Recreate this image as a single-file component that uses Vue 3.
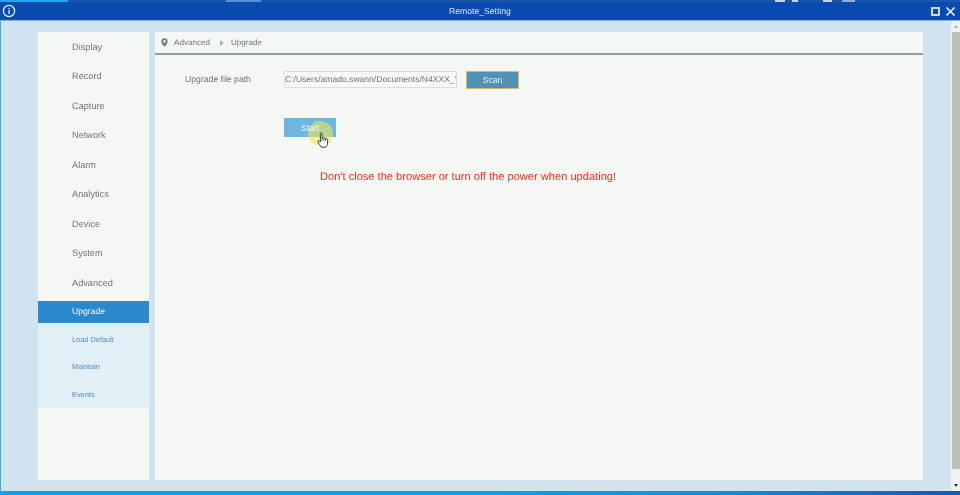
<template>
  <div class="window">
    <div class="topstrip">
      <span class="ts a"></span><span class="ts c"></span><span class="ts e"></span><span class="ts f"></span><span class="ts g"></span><span class="ts h"></span>
    </div>
    <header class="titlebar">
      <svg class="info" width="14" height="14" viewBox="0 0 14 14">
        <circle cx="7" cy="7" r="5.6" fill="none" stroke="#e8f0fa" stroke-width="1.3" />
        <rect x="6.4" y="6" width="1.3" height="4" fill="#e8f0fa" />
        <rect x="6.4" y="3.8" width="1.3" height="1.3" fill="#e8f0fa" />
      </svg>
      <span class="title">Remote_Setting</span>
      <div class="winbtns">
        <svg width="9" height="9" viewBox="0 0 9 9"><rect x="1" y="1" width="7" height="7" fill="none" stroke="#eef3fb" stroke-width="1.7" /></svg>
        <svg width="11" height="11" viewBox="0 0 11 11"><path d="M1.5 1.5 L9.5 9.5 M9.5 1.5 L1.5 9.5" stroke="#eef3fb" stroke-width="1.7" fill="none" /></svg>
      </div>
    </header>
    <div class="body">
      <div class="content">
        <nav class="sidebar">
          <a v-for="item in items" :key="item" class="nav">{{ item }}</a>
          <a class="nav active">Upgrade</a>
          <div class="subgroup">
            <a v-for="s in subs" :key="s" class="sub">{{ s }}</a>
          </div>
        </nav>
        <main class="panel">
          <div class="crumbs">
            <svg class="pin" width="7" height="9" viewBox="0 0 7 9">
              <path d="M3.5 0.2 A3.2 3.2 0 0 1 6.7 3.4 C6.7 5.3 4.6 7.4 3.5 8.8 C2.4 7.4 0.3 5.3 0.3 3.4 A3.2 3.2 0 0 1 3.5 0.2 Z" fill="#6f8080" />
              <circle cx="3.5" cy="3.3" r="1.2" fill="#f5f7f5" />
            </svg>
            <span class="crumb">Advanced</span>
            <span class="arrow"></span>
            <span class="crumb">Upgrade</span>
          </div>
          <div class="form">
            <div class="row">
              <label class="label">Upgrade file path</label>
              <div class="path">C:/Users/amado.swann/Documents/N4XXX_Y</div>
              <button class="scan">Scan</button>
            </div>
            <div class="startwrap">
              <span class="halo"></span>
              <button class="start">Start</button>
              <svg class="hand" width="12" height="16" viewBox="0 0 12 16">
                <path d="M3.4 1.6 C3.4 0.4 5 0.4 5 1.6 V6.2 C5.6 5.7 6.4 5.8 6.8 6.3 C7.4 5.9 8.2 6.1 8.5 6.7 C9.2 6.4 10.6 6.7 10.6 8 V11 C10.6 13 9.6 14.2 9 15.2 H4.4 C3.4 13.6 1.6 11.6 0.9 10 C0.5 9 1.6 8.2 2.4 9 L3.4 10 Z" fill="#fff" stroke="#2b2b2b" stroke-width="0.9" stroke-linejoin="round" />
                <path d="M5 6.2 V9 M6.8 6.3 V9 M8.5 6.7 V9" stroke="#2b2b2b" stroke-width="0.7" fill="none" />
              </svg>
            </div>
            <p class="warn">Don't close the browser or turn off the power when updating!</p>
          </div>
        </main>
      </div>
      <div class="scrollbar">
        <span class="up"></span>
        <span class="thumb"></span>
        <span class="down"></span>
      </div>
    </div>
    <div class="bottom"></div>
  </div>
</template>

<script setup>
const items = ['Display', 'Record', 'Capture', 'Network', 'Alarm', 'Analytics', 'Device', 'System', 'Advanced']
const subs = ['Load Default', 'Maintain', 'Events']
</script>

<style>
html, body { margin: 0; padding: 0; overflow: hidden; }
</style>

<style scoped>
.window {
  width: 960px;
  height: 495px;
  display: flex;
  flex-direction: column;
  overflow: hidden;
  font-family: "Liberation Sans", Arial, sans-serif;
  text-rendering: geometricPrecision;
  background: #d1e3ee;
  filter: blur(0.35px);
}
.topstrip {
  height: 2px;
  display: flex;
  background: #1c55ad;
}
.ts { display: block; height: 100%; }
.ts.a { width: 68px; background: #22a6f2; }
.ts.c { width: 35px; margin-left: 158px; background: #5b8fdc; }
.ts.e { width: 10px; margin-left: 514px; background: #c4d4ec; }
.ts.f { width: 6px; margin-left: 7px; background: #c4d4ec; }
.ts.g { width: 9px; margin-left: 25px; background: #c4d4ec; }
.ts.h { width: 13px; margin-left: 10px; background: #8fadd8; }
.titlebar {
  height: 18px;
  background: #0a4bb0;
  display: flex;
  align-items: center;
  position: relative;
  padding: 0 4px 0 2px;
  border-bottom: 1px solid #7fb4e4;
}
.info { display: block; }
.title {
  position: absolute;
  left: 449px;
  top: 3px;
  color: #d8e4f5;
  font-size: 8.65px;
  line-height: 13px;
}
.winbtns {
  margin-left: auto;
  display: flex;
  align-items: center;
  gap: 5px;
}
.winbtns svg { display: block; }
.body {
  flex: 1;
  min-height: 0;
  display: flex;
  border-left: 1px solid #2cb0f5;
}
.content {
  flex: 1;
  display: flex;
  gap: 6px;
  padding: 11px 28px 11px 37px;
  min-width: 0;
}
.sidebar {
  width: 111px;
  background: #f5f7f5;
  display: flex;
  flex-direction: column;
}
.nav {
  height: 29.5px;
  display: flex;
  align-items: center;
  padding-left: 34px;
  font-size: 9.2px;
  color: #727272;
}
.nav.active {
  height: 21px;
  padding-bottom: 1px;
  margin-top: 3px;
  background: #2c88cc;
  color: #f2f7fc;
  font-size: 8.6px;
}
.subgroup {
  background: #e3eff6;
  height: 85px;
  padding-top: 3px;
  box-sizing: border-box;
}
.sub {
  height: 27.5px;
  display: flex;
  align-items: center;
  padding-left: 34px;
  font-size: 7.4px;
  color: #4f8cc4;
}
.panel {
  flex: 1;
  background: #f5f7f5;
  min-width: 0;
}
.crumbs {
  height: 21px;
  border-bottom: 2px solid #8ba0a8;
  display: flex;
  align-items: center;
  padding-left: 6px;
  font-size: 8.1px;
  color: #727272;
}
.pin { display: block; margin-right: 6px; }
.arrow {
  width: 0;
  height: 0;
  border-left: 4px solid #a8b2b2;
  border-top: 3px solid transparent;
  border-bottom: 3px solid transparent;
  margin: 0 7px 0 10px;
}
.form { padding: 15px 0 0 30px; }
.row {
  display: flex;
  align-items: center;
  height: 19px;
}
.label {
  width: 99px;
  font-size: 8.67px;
  color: #727272;
  margin-top: -2px;
}
.path {
  width: 173px;
  height: 17px;
  border: 1px solid #dcdedb;
  background: #f7f8f6;
  box-sizing: border-box;
  font-size: 8.55px;
  line-height: 15px;
  color: #727272;
  white-space: nowrap;
  overflow: hidden;
}
.scan {
  width: 53px;
  height: 18px;
  margin-left: 9px;
  padding: 0;
  border: 1px solid #e0b868;
  background: #5191b6;
  color: #e8f2f8;
  font-family: inherit;
  font-size: 8.65px;
}
.startwrap {
  position: relative;
  margin: 29px 0 0 99px;
  width: 52px;
  height: 19px;
  background: #6cb6e0;
}
.start {
  position: relative;
  width: 52px;
  height: 19px;
  padding: 0;
  border: 0;
  background: transparent;
  color: #f4f9fc;
  font-family: inherit;
  font-size: 8.65px;
  display: block;
}
.halo {
  position: absolute;
  left: 24px;
  top: 3px;
  width: 25px;
  height: 25px;
  border-radius: 50%;
  background: rgba(236, 232, 90, 0.6);
}
.hand {
  position: absolute;
  left: 33px;
  top: 14px;
}
.warn {
  margin: 33px 0 0 135px;
  font-size: 11.1px;
  line-height: 14px;
  color: #f02a1a;
}
.scrollbar {
  width: 9px;
  background: #eef1ee;
  display: flex;
  flex-direction: column;
  align-items: center;
}
.up, .down {
  width: 0;
  height: 0;
  border-left: 2.5px solid transparent;
  border-right: 2.5px solid transparent;
  margin: 4px 0;
}
.up { border-bottom: 3px solid #aaa; }
.down { border-top: 3px solid #333; }
.thumb {
  flex: 1;
  width: 8px;
  background: #bdbfbb;
  margin: 0 0 11px;
}
.bottom {
  height: 4px;
  background: linear-gradient(to right, #05a3f5 0 50%, #0a8fe8 75%, #0a5cc4 100%);
  flex: none;
}
</style>
